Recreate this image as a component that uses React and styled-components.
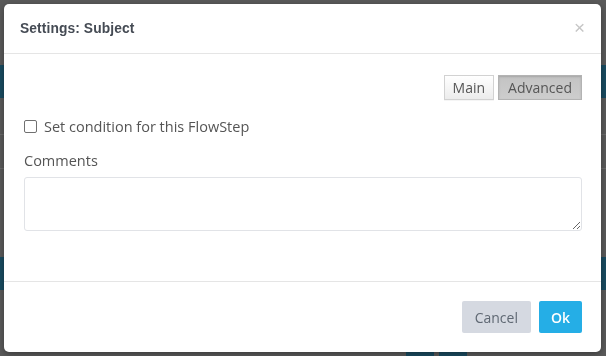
import React from "react";
import styled, { createGlobalStyle } from "styled-components";

const GlobalStyle = createGlobalStyle`
  html, body {
    margin: 0;
    padding: 0;
    background: #5a5a5a;
    font-family: "Open Sans", "Liberation Sans", sans-serif;
  }
`;

const Page = styled.div`
  height: 356px;
  display: flex;
  flex-direction: column;
  overflow: hidden;
`;

const Band = styled.div`
  height: ${(p) => p.h}px;
  flex-shrink: 0;
  background: ${(p) => p.bg || "transparent"};
  border-bottom: ${(p) => (p.line ? "1px solid #6b6b6b" : "none")};
`;

const TabStrip = styled.div`
  display: flex;
  gap: 5px;
  padding-left: 406px;
  margin-top: auto;
  height: 4px;
`;

const Tab = styled.div`
  width: ${(p) => p.w}px;
  background: #194b60;
`;

const Modal = styled.div`
  position: fixed;
  top: 4px;
  left: 4px;
  width: 597px;
  height: 348px;
  background: #fff;
  border-radius: 5px;
  box-shadow: 0 2px 6px rgba(0, 0, 0, 0.35);
  display: flex;
  flex-direction: column;
`;

const Header = styled.div`
  height: 50px;
  box-sizing: border-box;
  padding: 0 16px;
  display: flex;
  align-items: center;
  justify-content: space-between;
  border-bottom: 1px solid #e5e5e5;
`;

const Title = styled.h4`
  margin: 0;
  font-family: "Liberation Sans", Arial, sans-serif;
  font-weight: bold;
  font-size: 13.8px;
  color: #454b54;
  letter-spacing: 0.1px;
`;

const Close = styled.span`
  font-family: "Liberation Sans", Arial, sans-serif;
  font-size: 19px;
  line-height: 1;
  color: #c6c6c6;
  margin-top: -2px;
`;

const Body = styled.div`
  flex: 1;
  padding: 21px 19px 0 20px;
  display: flex;
  flex-direction: column;
`;

const Toggle = styled.div`
  display: flex;
  justify-content: flex-end;
  gap: 4px;
`;

const ToggleButton = styled.button`
  height: 25px;
  padding: 0 ${(p) => (p.active ? 9 : 8)}px;
  font-family: "Open Sans", sans-serif;
  font-size: 14px;
  color: #555;
  border: 1px solid ${(p) => (p.active ? "#b3b3b3" : "#d2d2d2")};
  background: ${(p) =>
    p.active
      ? "linear-gradient(#c3c3c3, #cdcdcd)"
      : "linear-gradient(#ffffff, #ececec)"};
  box-shadow: ${(p) =>
    p.active ? "inset 0 1px 2px rgba(0,0,0,0.15)" : "0 1px 0 rgba(0,0,0,0.04)"};
  border-radius: 0;
`;

const CheckRow = styled.label`
  display: flex;
  align-items: center;
  gap: 7px;
  margin-top: 17px;
  font-size: 14.5px;
  color: #555;
`;

const Box = styled.span`
  width: 11px;
  height: 11px;
  border: 1px solid #707070;
  border-radius: 2px;
  background: #fff;
`;

const Label = styled.div`
  margin-top: 15px;
  font-size: 14.5px;
  color: #555;
`;

const Comments = styled.textarea`
  margin-top: 7px;
  height: 54px;
  box-sizing: border-box;
  border: 1px solid #e1e3e7;
  border-radius: 3px;
  resize: vertical;
  outline: none;
  font-family: "Open Sans", sans-serif;
  font-size: 14px;
`;

const Footer = styled.div`
  border-top: 1px solid #e5e5e5;
  padding: 19px 19px 19px 20px;
  display: flex;
  justify-content: flex-end;
  gap: 8px;
`;

const Action = styled.button`
  height: 32px;
  padding: 0 ${(p) => (p.primary ? 12 : 13)}px;
  border: none;
  border-radius: 2px;
  font-family: "Open Sans", sans-serif;
  font-size: 14px;
  font-weight: ${(p) => (p.primary ? 600 : 400)};
  color: ${(p) => (p.primary ? "#fff" : "#5f6873")};
  background: ${(p) => (p.primary ? "#25aee6" : "#d5d9e1")};
`;

export default function App() {
  return (
    <>
      <GlobalStyle />
      <Page>
        <Band h={65} />
        <Band h={33} bg="#194b60" />
        <Band h={36} line />
        <Band h={33} line />
        <Band h={88} />
        <Band h={33} bg="#194b60" />
        <TabStrip>
          <Tab w={28} />
          <Tab w={28} />
        </TabStrip>
      </Page>
      <Modal>
        <Header>
          <Title>Settings: Subject</Title>
          <Close>×</Close>
        </Header>
        <Body>
          <Toggle>
            <ToggleButton>Main</ToggleButton>
            <ToggleButton active>Advanced</ToggleButton>
          </Toggle>
          <CheckRow>
            <Box />
            Set condition for this FlowStep
          </CheckRow>
          <Label>Comments</Label>
          <Comments />
        </Body>
        <Footer>
          <Action>Cancel</Action>
          <Action primary>Ok</Action>
        </Footer>
      </Modal>
    </>
  );
}
